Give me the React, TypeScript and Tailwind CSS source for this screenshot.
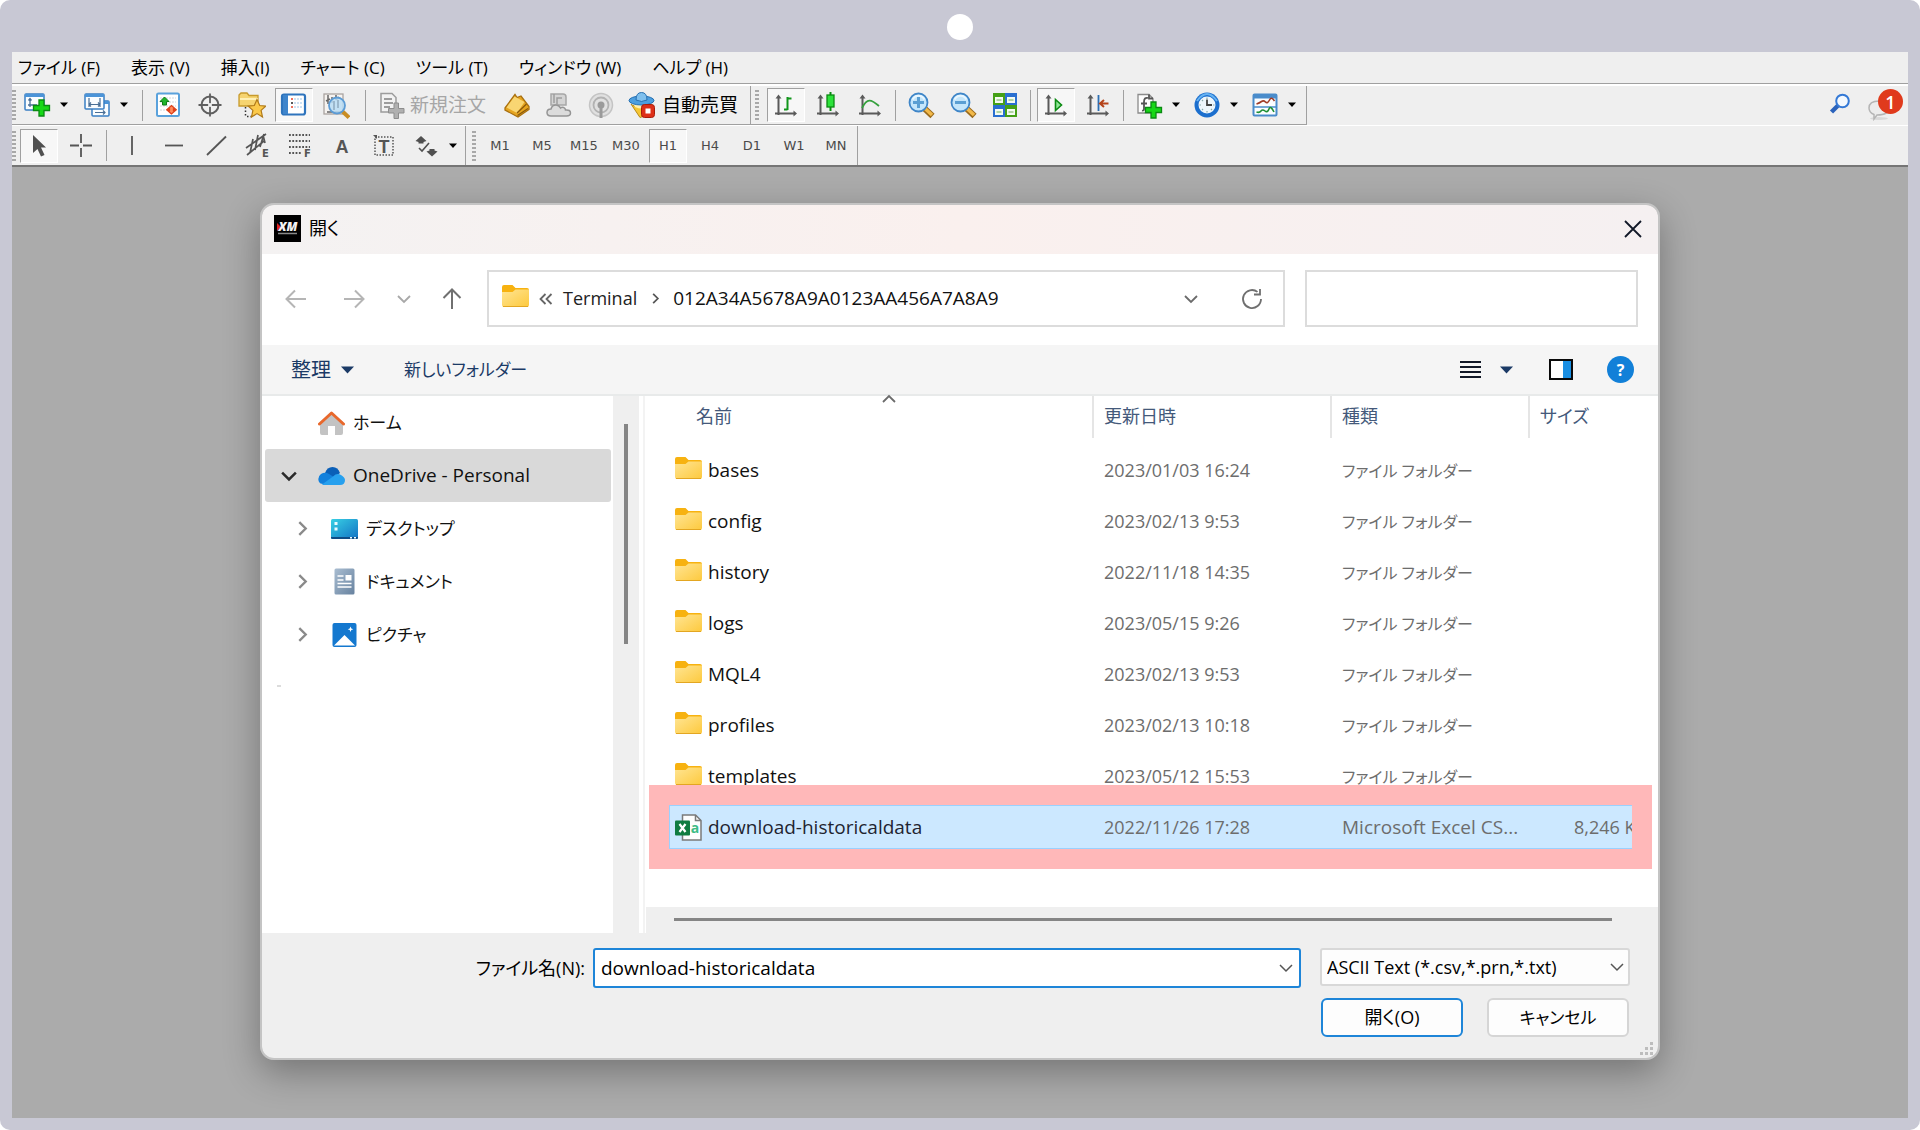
import { useState } from 'react';
import type { ReactNode } from 'react';

const FONT = "font-['Open_Sans','Noto_Sans_CJK_JP',sans-serif] [font-feature-settings:'palt']";

const MENUS = ['ファイル (F)', '表示 (V)', '挿入(I)', 'チャート (C)', 'ツール (T)', 'ウィンドウ (W)', 'ヘルプ (H)'];
const PERIODS = ['M1', 'M5', 'M15', 'M30', 'H1', 'H4', 'D1', 'W1', 'MN'];

const FILES = [
  { name: 'bases', date: '2023/01/03 16:24' },
  { name: 'config', date: '2023/02/13 9:53' },
  { name: 'history', date: '2022/11/18 14:35' },
  { name: 'logs', date: '2023/05/15 9:26' },
  { name: 'MQL4', date: '2023/02/13 9:53' },
  { name: 'profiles', date: '2023/02/13 10:18' },
  { name: 'templates', date: '2023/05/12 15:53' },
];

/* ---------- toolbar parts ---------- */

function Icon({ children }: { children: ReactNode }) {
  return (
    <svg width="28" height="28" viewBox="0 0 28 28" fill="none" className="shrink-0" aria-hidden="true">
      {children}
    </svg>
  );
}

function Tool({ label, pressed, children }: { label: string; pressed?: boolean; children: ReactNode }) {
  return (
    <button
      type="button"
      aria-label={label}
      aria-pressed={pressed}
      className={
        'mx-0.5 flex h-[34px] w-[38px] shrink-0 items-center justify-center border ' +
        (pressed ? 'border-t-[#a0a0a0] border-l-[#a0a0a0] border-r-white border-b-white bg-[#f7f7f7]' : 'border-transparent')
      }
    >
      {children}
    </button>
  );
}

function Caret({ label }: { label: string }) {
  return (
    <button type="button" aria-label={label} className="flex h-[34px] w-3 shrink-0 items-center justify-center">
      <svg width="10" height="6" viewBox="0 0 10 6" aria-hidden="true">
        <path d="M1 0.500h8L5 5z" fill="#000" />
      </svg>
    </button>
  );
}

function Sep() {
  return <div className="mx-1 h-[31px] w-px shrink-0 bg-[#a0a0a0]" />;
}

function Grip() {
  return <div className="h-[30px] w-1 shrink-0 bg-[repeating-linear-gradient(to_bottom,#a8a8a8_0_2px,#efefef_2px_4px)]" />;
}

function Plus({ y }: { y: number }) {
  return (
    <path
      transform={`translate(18.500 ${y})`}
      d="M-2.500-8h5v5.500h5.500v5h-5.500v5.500h-5v-5.500h-5.500v-5h5.500z"
      fill="#17d817"
      stroke="#0a8a12"
      strokeWidth="1.300"
    />
  );
}

function Axes() {
  return (
    <g stroke="#5a5a5a" strokeWidth="2">
      <path d="M6.500 6v18M3 22.500h20" />
      <path d="M3.500 7.500h6L6.500 3.500zM21.500 19.500v6l3.500-3z" fill="#5a5a5a" stroke="none" />
    </g>
  );
}

function Magnifier({ plus }: { plus?: boolean }) {
  return (
    <Icon>
      <path d="M17.500 17.500l8 7.500" stroke="#9a6a1c" strokeWidth="6" />
      <path d="M18 17.500l7 6.500" stroke="#f2b94a" strokeWidth="3.500" />
      <circle cx="11.500" cy="11.500" r="9" fill="#c4e6fb" stroke="#3f86c8" strokeWidth="1.800" />
      <path d="M5.500 8.500c3-5 9-5 12 0" stroke="#e9f7ff" strokeWidth="2" />
      <path d={plus ? 'M6 11.500h11M11.500 6v11' : 'M6 11.500h11'} stroke="#5a9fd3" strokeWidth="3" />
    </Icon>
  );
}

function ChartWindow({ x, y, w, h }: { x: number; y: number; w: number; h: number }) {
  return (
    <g>
      <rect x={x} y={y} width={w} height={h} rx="1" fill="#fafdff" stroke="#3a7fc4" strokeWidth="1.500" />
      <path d={`M${x} ${y + 1.5}h${w}`} stroke="#4b94d8" strokeWidth="3" />
    </g>
  );
}

/* ---------- dialog icons ---------- */

function Folder() {
  return (
    <svg width="27" height="23" viewBox="0 0 27 23" className="mb-1 shrink-0" aria-hidden="true">
      <defs>
        <linearGradient id="folder" x1="0" y1="0" x2="1" y2="1">
          <stop offset="0" stopColor="#ffe594" />
          <stop offset="1" stopColor="#fdc93d" />
        </linearGradient>
      </defs>
      <path d="M0 2q0-2 2-2h8.500l3 3H25q2 0 2 2v8H0z" fill="#f7b210" />
      <path d="M0 7h10.500l3-2.500H27V20q0 2-2 2H2q-2 0-2-2z" fill="url(#folder)" />
      <path d="M1 21.500h25" stroke="#e3a621" strokeWidth="1" />
    </svg>
  );
}

function Chevron({ dir, size = 14, color = '#6b6b6b', weight = 1.5 }: { dir: 'down' | 'right' | 'up'; size?: number; color?: string; weight?: number }) {
  const d = dir === 'down' ? 'M1 4l6 6 6-6' : dir === 'up' ? 'M1 10l6-6 6 6' : 'M4 1l6 6-6 6';
  return (
    <svg width={size} height={size} viewBox="0 0 14 14" fill="none" aria-hidden="true">
      <path d={d} stroke={color} strokeWidth={weight} />
    </svg>
  );
}

function BlueCaret() {
  return (
    <svg width="13" height="8" viewBox="0 0 13 8" aria-hidden="true">
      <path d="M0 0.500h13L6.500 7.500z" fill="#1b3a66" />
    </svg>
  );
}

/* ---------- main window ---------- */

function StandardToolbar() {
  return (
    <div className="flex h-[39px] w-max items-center border-r border-b border-[#a0a0a0]">
      <Grip />
      <Tool label="新規チャート">
        <Icon>
          <ChartWindow x={2} y={3} w={19} h={16} />
          <path d="M7 8v8M5 14h9M5.500 9.500L7 7.500l1.500 2" stroke="#4a6f96" strokeWidth="1.300" />
          <Plus y={17} />
        </Icon>
      </Tool>
      <Caret label="新規チャートのメニュー" />
      <div className="w-1.5" />
      <Tool label="プロファイル">
        <Icon>
          <ChartWindow x={9} y={10} w={17} h={15} />
          <ChartWindow x={2} y={3} w={19} h={15} />
          <path d="M6 7v9M17 7v9M6 13.500h11M8 11.500l-2 2 2 2M15 11.500l2 2-2 2" stroke="#4a6f96" strokeWidth="1.200" />
          <path d="M12 21.500h10M20 19.500l2 2-2 2" stroke="#4a6f96" strokeWidth="1.200" />
        </Icon>
      </Tool>
      <Caret label="プロファイルのメニュー" />
      <div className="w-2" />
      <Sep />
      <Tool label="気配値表示">
        <Icon>
          <rect x="3" y="2.500" width="22" height="22.500" rx="1.500" fill="#fff" stroke="#5aa2dc" strokeWidth="2" />
          <path d="M6 7h16M6 11h16M6 15h16M6 19h16" stroke="#cfd6dc" strokeDasharray="2 1" />
          <path d="M10.500 6l4.500 4.500h-2.500v3.500h-4v-3.500H6z" fill="#1fb52b" stroke="#0d7d17" />
          <path d="M17.500 23l-4-3.500h2v-1.500h-2l4-3.500 4 3.500h-2v1.500h2z" fill="#ff8a5c" stroke="#e0421a" strokeWidth="1.300" />
        </Icon>
      </Tool>
      <Tool label="データウィンドウ">
        <Icon>
          <circle cx="14" cy="14" r="8.500" stroke="#5f5f5f" strokeWidth="2" />
          <path d="M14 2.500v23M2.500 14h23" stroke="#5f5f5f" strokeWidth="1.800" />
          <circle cx="14" cy="14" r="2" fill="#efefef" />
        </Icon>
      </Tool>
      <Tool label="ナビゲーター">
        <Icon>
          <path d="M1 4l2-2h6l2 2.500h9V15H1z" fill="#f6d470" stroke="#c79a2c" strokeWidth="1.300" />
          <path d="M2 8h18" stroke="#fff0b5" strokeWidth="2" />
          <path d="M7.500 16v10M9 25.500h5" stroke="#333" strokeWidth="1.500" strokeDasharray="1.500 2" />
          <path d="M19 8.500l2.700 6 6 .6-4.600 4.300 1.400 6.600-5.500-3.400-5.500 3.400 1.400-6.600-4.600-4.300 6-.6z" fill="#fbc94a" stroke="#b07a1a" strokeWidth="1.200" />
        </Icon>
      </Tool>
      <Tool label="ターミナル" pressed>
        <Icon>
          <rect x="2" y="3.500" width="23" height="20" rx="2" fill="#fff" stroke="#2e74bd" strokeWidth="2.200" />
          <path d="M5.500 4v19" stroke="#3e85cc" strokeWidth="5" />
          <path d="M11 8h2M11 16h2" stroke="#e8442a" strokeWidth="1.600" />
          <path d="M11 12h2" stroke="#222" strokeWidth="1.600" />
          <path d="M14 8h9M14 12h9M14 16h9" stroke="#9cc6ea" strokeWidth="1.200" strokeDasharray="2 1" />
        </Icon>
      </Tool>
      <Tool label="ストラテジーテスター">
        <Icon>
          <rect x="2" y="3" width="19" height="20" fill="#f6f3f0" stroke="#aaa4a0" strokeWidth="1.300" />
          <path d="M6 4v9M4 10l4-2M10 6v6M14 4v5M17 6l-3 3M5 21h14" stroke="#666" strokeWidth="1.500" />
          <path d="M20 20l7 6.500" stroke="#c98d24" strokeWidth="4" />
          <circle cx="15" cy="14.500" r="8" fill="#b9dcf5" fillOpacity="0.850" stroke="#5b9bd5" strokeWidth="1.800" />
          <path d="M12 10v9M16 9v8" stroke="#8ea9bf" strokeWidth="1.500" />
        </Icon>
      </Tool>
      <div className="w-1" />
      <Sep />
      <button type="button" disabled className="ml-2 flex items-center gap-1 pr-2.5 text-[19px] leading-6 text-[#a6a6a6]">
        <Icon>
          <path d="M3 2.500h11l4 4V21H3z" fill="#f2f2f2" stroke="#9c9c9c" strokeWidth="1.500" />
          <path d="M6 8h8M6 12h9M6 16h6" stroke="#9c9c9c" strokeWidth="1.800" />
          <path d="M16 12h4.500v5.500H26V22h-5.500v5.500H16V22h-5.500v-4.500H16z" fill="#b0b0b0" stroke="#8d8d8d" />
        </Icon>
        新規注文
      </button>
      <Tool label="MetaEditor">
        <Icon>
          <path d="M2 17L12 3.500l2 3 4-1.500 8 10.500v3L15 26 2 19z" fill="#e6a520" stroke="#a9700f" strokeWidth="1.300" />
          <path d="M3.500 16.500l8-11 10 5.500-7.500 11z" fill="#f9d672" />
          <path d="M14.500 24.500L25 17.500M14 22l9.500-9" stroke="#8b5a0c" strokeWidth="1.300" />
        </Icon>
      </Tool>
      <Tool label="MQL5 クラウド">
        <Icon>
          <path d="M6 3h12q3 0 3 3v8H6z" fill="#d4d4d4" stroke="#a7a7a7" strokeWidth="1.500" />
          <path d="M9 3v9M17 7h-5v6" stroke="#9d9d9d" strokeWidth="1.500" />
          <path d="M6 25q-4 0-4-3.500T6 18q1-4 5-4 3 0 4.500 3 2-1.500 4 0 1 1 1 2 5-.5 5 3 0 3-4 3z" fill="#dcdcdc" stroke="#959595" strokeWidth="1.500" />
        </Icon>
      </Tool>
      <Tool label="シグナル">
        <Icon>
          <circle cx="14" cy="14" r="11.500" fill="#e0e0e0" stroke="#c4c4c4" strokeWidth="1.500" />
          <circle cx="14" cy="14" r="7.500" stroke="#b2b2b2" strokeWidth="1.800" />
          <circle cx="14" cy="14" r="3.500" fill="#9a9a9a" />
          <path d="M14 14v13" stroke="#9a9a9a" strokeWidth="3" />
        </Icon>
      </Tool>
      <button type="button" className="mr-1 ml-1.5 flex items-center gap-1.5 pr-2 text-[19px] leading-6 text-black">
        <Icon>
          <path d="M3 13c3 4 18 4 21 0l-5 11-7 2.500z" fill="#f6c733" stroke="#b98a17" />
          <path d="M5 12q9 6 17 0l-2 4q-6 3-13 0z" fill="#fff0b0" />
          <ellipse cx="13.500" cy="9.500" rx="12.500" ry="4.500" fill="#4d9fdf" stroke="#2770b1" />
          <path d="M8 9q0-7.500 5.500-7.500T19 9q-5.500 3-11 0z" fill="#7fc0ee" stroke="#2770b1" />
          <rect x="13.500" y="13.500" width="13" height="13" rx="3" fill="#de3018" stroke="#a81d0b" />
          <rect x="17.500" y="17.500" width="5" height="5" fill="#fff" />
        </Icon>
        自動売買
      </button>
      <div className="h-full w-px shrink-0 bg-[#a0a0a0]" />
      <div className="w-1" />
      <Grip />
      <div className="w-1.5" />
      <Tool label="バーチャート" pressed>
        <Icon>
          <Axes />
          <path d="M15.500 6v13M15.500 7.500h4M12 18.500h3.500" stroke="#12961c" strokeWidth="2" />
        </Icon>
      </Tool>
      <Tool label="ローソク足">
        <Icon>
          <Axes />
          <path d="M16.500 1v19" stroke="#0a8a12" strokeWidth="2" />
          <rect x="13" y="4" width="7" height="12" fill="#2ce23a" stroke="#0a8a12" strokeWidth="1.300" />
        </Icon>
      </Tool>
      <Tool label="ラインチャート">
        <Icon>
          <Axes />
          <path d="M6 17c5-10 9-9 17-2" stroke="#35a03d" strokeWidth="1.800" />
        </Icon>
      </Tool>
      <Sep />
      <Tool label="拡大"><Magnifier plus /></Tool>
      <Tool label="縮小"><Magnifier /></Tool>
      <Tool label="チャートの整列">
        <Icon>
          <rect x="2" y="2" width="12" height="12" fill="#45a016" />
          <rect x="14" y="2" width="12" height="12" fill="#2a6fd0" />
          <rect x="2" y="14" width="12" height="12" fill="#2a6fd0" />
          <rect x="14" y="14" width="12" height="12" fill="#45a016" />
          <path d="M4 6h8v6H4zM16 6h8v6h-8zM4 18h8v6H4zM16 18h8v6h-8z" fill="#f4fbf2" />
          <path d="M5.500 9h5M17.500 9h5M5.500 21h5M17.500 21h5" stroke="#9cc88a" strokeWidth="1.500" />
        </Icon>
      </Tool>
      <Sep />
      <Tool label="自動スクロール" pressed>
        <Icon>
          <Axes />
          <path d="M13.500 8.500v11l6-5.500z" fill="#8fe796" stroke="#0a8a12" strokeWidth="1.600" />
        </Icon>
      </Tool>
      <Tool label="チャートの右端移動">
        <Icon>
          <Axes />
          <path d="M14.500 4v16" stroke="#2c6fb3" strokeWidth="1.800" />
          <path d="M16.500 12.500h8M20 9l-4 3.500 4 3.500" stroke="#b5431a" strokeWidth="2" />
        </Icon>
      </Tool>
      <Sep />
      <Tool label="インディケーター">
        <Icon>
          <path d="M3 3.500h11l4 4V22H3z" fill="#fdfdfd" stroke="#8b8b8b" strokeWidth="1.300" />
          <path d="M14 3.500v4h4M13 7q-4-1-4 4v7q0 2-2 1.500M6 12.500h6" stroke="#555" strokeWidth="1.800" />
          <Plus y={19} />
        </Icon>
      </Tool>
      <Caret label="インディケーターのメニュー" />
      <div className="w-1" />
      <Tool label="時間足">
        <Icon>
          <circle cx="14" cy="14" r="12.500" fill="#1c6fce" />
          <path d="M4 10q10-14 20 0" stroke="#67b3f2" strokeWidth="2" />
          <circle cx="14" cy="14" r="8.500" fill="#eef6fc" />
          <path d="M14 8.500V14h5" stroke="#444" strokeWidth="1.800" />
          <path d="M14 6.500v1.500M14 20v1.500M6.500 14H8M20 14h1.500M9 9l1 1M19 19l-1-1M9 19l1-1" stroke="#8aa" strokeWidth="1.200" />
        </Icon>
      </Tool>
      <Caret label="時間足のメニュー" />
      <div className="w-1" />
      <Tool label="定型チャート">
        <Icon>
          <rect x="2.500" y="3.500" width="23" height="21" rx="1" fill="#fbfdff" stroke="#4a8ccb" strokeWidth="2" />
          <path d="M2 5.500h24" stroke="#4a8ccb" strokeWidth="4" />
          <path d="M3 16h22" stroke="#4a8ccb" strokeWidth="1.500" />
          <path d="M5.500 13q3-1 5-2.500t4 .5 4-2 5 1" stroke="#a03c28" strokeWidth="1.600" />
          <path d="M5.500 21q3 1 4.500-1t4 0 4-2 5 3" stroke="#1f8f35" strokeWidth="1.600" />
        </Icon>
      </Tool>
      <Caret label="定型チャートのメニュー" />
      <div className="w-2" />
    </div>
  );
}

function LineToolbar() {
  const [period, setPeriod] = useState('H1');
  return (
    <div className="flex h-[39px] items-center">
      <Grip />
      <div className="w-0.5" />
      <Tool label="カーソル" pressed>
        <Icon>
          <path d="M8 3v18l4.500-4 3.500 7.500 3.500-1.500-3.500-7.500h5z" fill="#505050" />
        </Icon>
      </Tool>
      <Tool label="クロスヘア">
        <Icon>
          <path d="M14 2v9M14 16v9M3 13.500h9M16 13.500h9" stroke="#555" strokeWidth="1.800" />
        </Icon>
      </Tool>
      <Sep />
      <Tool label="垂直線">
        <Icon><path d="M14 4v19" stroke="#555" strokeWidth="1.800" /></Icon>
      </Tool>
      <Tool label="水平線">
        <Icon><path d="M5 13.500h18" stroke="#555" strokeWidth="1.800" /></Icon>
      </Tool>
      <Tool label="トレンドライン">
        <Icon><path d="M5 23L24 4.500" stroke="#555" strokeWidth="1.800" /></Icon>
      </Tool>
      <Tool label="等距離チャネル">
        <Icon>
          <path d="M2 16L22 2M3 23L20 9M6 21l3-14M11 18l3-15M16 15l4-13M19 3l2 8" stroke="#555" strokeWidth="1.700" />
          <text x="18" y="25" fontSize="10" fontWeight="700" fill="#555" fontFamily="DejaVu Sans, sans-serif">E</text>
        </Icon>
      </Tool>
      <Tool label="フィボナッチ">
        <Icon>
          <path d="M3 3h21M3 9h21M3 15h21M3 21h13" stroke="#555" strokeWidth="1.800" strokeDasharray="1.800 1.500" />
          <text x="18" y="25" fontSize="10" fontWeight="700" fill="#555" fontFamily="DejaVu Sans, sans-serif">F</text>
        </Icon>
      </Tool>
      <Tool label="テキスト">
        <Icon>
          <text x="14" y="20.500" textAnchor="middle" fontSize="18" fontWeight="700" fill="#555" fontFamily="Liberation Sans, sans-serif">A</text>
        </Icon>
      </Tool>
      <Tool label="テキストラベル">
        <Icon>
          <rect x="5" y="5" width="18" height="18" stroke="#555" strokeWidth="1.500" strokeDasharray="1.500 1.500" />
          <path d="M3 3h4v4z" fill="#555" />
          <text x="14" y="20.500" textAnchor="middle" fontSize="18" fontWeight="700" fill="#555" fontFamily="Liberation Sans, sans-serif">T</text>
        </Icon>
      </Tool>
      <Tool label="矢印">
        <Icon>
          <path d="M9 4l5.500 5-3 1v1.500h-5V10l-3-1zM20 24.500l-5.500-5 3-1V17h5v1.500l3 1z" fill="#505050" />
          <path d="M7 16l3 3 7-8" stroke="#505050" strokeWidth="1.600" />
        </Icon>
      </Tool>
      <Caret label="矢印のメニュー" />
      <div className="w-1.5" />
      <div className="h-full w-px bg-[#a0a0a0]" />
      <div className="w-1.5" />
      <Grip />
      <div className="w-[3px]" />
      {PERIODS.map((p) => (
        <button
          key={p}
          type="button"
          aria-pressed={p === period}
          onClick={() => setPeriod(p)}
          className={
            "mx-0.5 h-[34px] w-[38px] border font-['DejaVu_Sans',sans-serif] text-[13px] text-[#4a4a4a] " +
            (p === period ? 'border-t-[#a0a0a0] border-l-[#a0a0a0] border-r-white border-b-white bg-[#f7f7f7]' : 'border-transparent')
          }
        >
          {p}
        </button>
      ))}
      <div className="h-full w-px bg-[#a0a0a0]" />
    </div>
  );
}

function AppHeader() {
  return (
    <header className="border-b-2 border-[#757575] bg-[#efefef]">
      <nav className="flex h-8 items-center gap-[31px] border-b border-[#a0a0a0] pl-1.5">
        {MENUS.map((m) => (
          <button key={m} type="button" className="text-[17px] leading-6 whitespace-nowrap text-black">
            {m}
          </button>
        ))}
      </nav>
      <div className="flex justify-between border-t-2 border-white">
        <StandardToolbar />
        <div className="flex items-start gap-4 pt-[3px] pr-[5px]">
          <button type="button" aria-label="検索" className="pt-1">
            <svg width="22" height="22" viewBox="0 0 22 22" fill="none" aria-hidden="true">
              <path d="M9 12.500L2.500 19" stroke="#2a62bb" strokeWidth="4.500" />
              <circle cx="13.500" cy="8" r="6.300" fill="#f4f9fe" stroke="#3479d6" strokeWidth="2" />
            </svg>
          </button>
          <button type="button" aria-label="通知" className="relative h-8 w-9">
            <svg width="36" height="32" viewBox="0 0 36 32" aria-hidden="true">
              <ellipse cx="12" cy="29.500" rx="9" ry="1.500" fill="#d9d9d9" />
              <path d="M2 19q0-7 10-7t10 7q0 7-12 7l-3 4v-4.500q-5-2-5-6.500z" fill="#ececec" stroke="#b5b5b5" strokeWidth="1.500" />
            </svg>
            <span className="absolute top-0 right-0 flex size-[25px] items-center justify-center rounded-full bg-[#e03a1c] text-[18px] leading-none font-semibold text-white">
              1
            </span>
          </button>
        </div>
      </div>
      <div className="border-t border-white">
        <LineToolbar />
      </div>
    </header>
  );
}

/* ---------- file dialog ---------- */

function TitleBar() {
  return (
    <div className="flex h-[49px] items-center justify-between bg-linear-to-r from-[#f4f2f2] via-[#faf0ee] to-[#f5f0f1] pr-4 pb-0.5 pl-3">
      <h1 className="flex items-center gap-2 text-[18px] text-black">
        <svg width="27" height="27" viewBox="0 0 27 27" aria-hidden="true">
          <rect width="27" height="27" fill="#000" />
          <path d="M3 8l4 4-4 4z" fill="#e02020" />
          <text x="14" y="16" textAnchor="middle" fontSize="12" fontWeight="800" fontStyle="italic" fill="#f2f2f2" fontFamily="Open Sans, sans-serif">XM</text>
          <path d="M4 18.500h19" stroke="#8a8a8a" strokeWidth="1.500" />
        </svg>
        開く
      </h1>
      <button type="button" aria-label="閉じる">
        <svg width="18" height="18" viewBox="0 0 18 18" fill="none" aria-hidden="true">
          <path d="M1 1l16 16M17 1L1 17" stroke="#111827" strokeWidth="1.800" />
        </svg>
      </button>
    </div>
  );
}

function AddressRow() {
  return (
    <div className="flex h-[91px] items-center gap-5 bg-white pr-5 pb-0.5 pl-[23px]">
      <div className="flex shrink-0 items-center">
        <button type="button" aria-label="戻る" className="w-[58px]">
          <svg width="22" height="20" viewBox="0 0 22 20" fill="none" aria-hidden="true">
            <path d="M21 10H2M10 1.500L1.500 10l8.500 8.500" stroke="#b5b5b5" strokeWidth="2" />
          </svg>
        </button>
        <button type="button" aria-label="進む" className="w-[54px]">
          <svg width="22" height="20" viewBox="0 0 22 20" fill="none" aria-hidden="true">
            <path d="M1 10h19M12 1.500l8.500 8.500-8.500 8.500" stroke="#b5b5b5" strokeWidth="2" />
          </svg>
        </button>
        <button type="button" aria-label="最近表示した場所" className="w-[45px]">
          <Chevron dir="down" color="#a8a8a8" weight={1.8} />
        </button>
        <button type="button" aria-label="上へ" className="w-[25px]">
          <svg width="20" height="22" viewBox="0 0 20 22" fill="none" aria-hidden="true">
            <path d="M10 21V2M1.500 10L10 1.500l8.500 8.500" stroke="#707070" strokeWidth="2" />
          </svg>
        </button>
      </div>
      <div className="flex h-[57px] min-w-0 flex-1 items-center border-2 border-[#dcdcdc] bg-white pr-5 pl-[13px]">
        <Folder />
        <span className="flex w-[34px] justify-center">
          <svg width="14" height="12" viewBox="0 0 14 12" fill="none" aria-hidden="true">
            <path d="M6.500 1L1.500 6l5 5M12.500 1l-5 5 5 5" stroke="#666" strokeWidth="1.800" />
          </svg>
        </span>
        <span className="text-[18px] text-[#222]">Terminal</span>
        <span className="flex w-9 justify-center"><Chevron dir="right" size={11} color="#555" weight={2.2} /></span>
        <span className="flex-1 truncate text-[19px] text-[#111]">012A34A5678A9A0123AA456A7A8A9</span>
        <button type="button" aria-label="履歴" className="mr-[43px]"><Chevron dir="down" weight={1.8} /></button>
        <button type="button" aria-label="最新の情報に更新">
          <svg width="22" height="22" viewBox="0 0 22 22" fill="none" aria-hidden="true">
            <path d="M20 11a9 9 0 1 1-3.500-7.100" stroke="#6f6f6f" strokeWidth="1.800" />
            <path d="M19 1v5.500h-6" stroke="#6f6f6f" strokeWidth="1.800" />
          </svg>
        </button>
      </div>
      <input type="search" aria-label="検索" className="h-[57px] w-[333px] border-2 border-[#dcdcdc] bg-white px-3 text-[18px] outline-none" />
    </div>
  );
}

function CommandBar() {
  return (
    <div className="flex h-[51px] items-center justify-between border-b-2 border-[#e8eaea] bg-[#f5f5f5] pr-6 pl-[29px] text-[#1b3a66]">
      <div className="flex items-center gap-[50px]">
        <button type="button" className="flex items-center gap-2.5 text-[20px] leading-6">
          整理
          <BlueCaret />
        </button>
        <button type="button" className="text-[17px] leading-6">新しいフォルダー</button>
      </div>
      <div className="flex items-center">
        <button type="button" aria-label="表示方法の変更" className="flex items-center gap-[18px]">
          <svg width="22" height="18" viewBox="0 0 22 18" aria-hidden="true">
            <path d="M0 1h21M0 6h21M0 11h21M0 16h21" stroke="#111827" strokeWidth="2" />
          </svg>
          <BlueCaret />
        </button>
        <button type="button" aria-label="プレビュー ウィンドウ" className="ml-9">
          <svg width="24" height="21" viewBox="0 0 24 21" aria-hidden="true">
            <rect x="1" y="1" width="22" height="19" fill="#fff" />
            <rect x="14" y="1" width="9" height="19" fill="#1a8fe3" />
            <rect x="1" y="1" width="22" height="19" fill="none" stroke="#0a0a0a" strokeWidth="2" />
          </svg>
        </button>
        <button
          type="button"
          aria-label="ヘルプ"
          className="ml-[34px] flex size-[27px] items-center justify-center rounded-full bg-[#1280d8] text-[16px] leading-none font-bold text-white"
        >
          ?
        </button>
      </div>
    </div>
  );
}

function Sidebar() {
  return (
    <div className="flex w-[377px] shrink-0 bg-white">
      <nav className="flex-1 pr-0.5 pl-[3px] text-[17px] text-[#111]">
        <a href="#home" className="flex h-[53px] items-center gap-2 pl-[53px]">
          <svg width="27" height="26" viewBox="0 0 27 26" fill="none" aria-hidden="true">
            <path d="M2 12L13.500 3 25 12v11q0 2-2 2h-6v-9h-7v9H4q-2 0-2-2z" fill="#c3c3c3" />
            <path d="M1.500 14L13.500 3l12 11" stroke="#e8682c" strokeWidth="3" strokeLinecap="round" strokeLinejoin="round" />
          </svg>
          ホーム
        </a>
        <a href="#onedrive" className="flex h-[53px] items-center rounded-[3px] bg-[#d9d9d9] pl-4 text-[19px]">
          <span className="w-[37px]"><Chevron dir="down" size={16} color="#2a2a2a" weight={2.2} /></span>
          <svg width="27" height="18" viewBox="0 0 27 18" className="mr-2" aria-hidden="true">
            <path d="M7 6Q9 0 14.500 0 20 0 22 6l-8 6z" fill="#0a5fb8" />
            <path d="M1 15q-2-5 2-8 4-2.500 8 0l8 5-6 5H5q-3 0-4-2z" fill="#1280dc" />
            <path d="M4 17.500l11-8q4-4 8-1.500 4 2.500 4 5 0 5-5 5H7q-2 0-3-.5z" fill="#27a0ee" />
          </svg>
          OneDrive - Personal
        </a>
        <a href="#desktop" className="flex h-[53px] items-center pl-[30px]">
          <span className="w-9"><Chevron dir="right" size={15} color="#8a8a8a" weight={2.2} /></span>
          <svg width="27" height="20" viewBox="0 0 27 20" className="mr-2" aria-hidden="true">
            <defs>
              <linearGradient id="desk" x1="0" y1="0" x2="1" y2="1">
                <stop offset="0" stopColor="#38d0e4" />
                <stop offset="1" stopColor="#1272c4" />
              </linearGradient>
            </defs>
            <rect width="27" height="20" rx="1.500" fill="url(#desk)" />
            <path d="M0 18h27v.5q0 1.500-1.500 1.500h-24Q0 20 0 18.500z" fill="#0f4c85" />
            <path d="M3.500 3h3v3h-3zM3.500 8.500h3v3h-3zM19 18h2v1.500h-2zM23 18h2v1.500h-2z" fill="#e9fbff" />
          </svg>
          デスクトップ
        </a>
        <a href="#documents" className="flex h-[53px] items-center pl-[30px]">
          <span className="w-9"><Chevron dir="right" size={15} color="#8a8a8a" weight={2.2} /></span>
          <svg width="27" height="27" viewBox="0 0 27 27" className="mr-2" aria-hidden="true">
            <defs>
              <linearGradient id="doc" x1="0" y1="0" x2="1" y2="1">
                <stop offset="0" stopColor="#a9bdd1" />
                <stop offset="1" stopColor="#67829f" />
              </linearGradient>
            </defs>
            <rect x="3.500" y="0.500" width="20" height="26" rx="1.500" fill="url(#doc)" />
            <path d="M6.500 8h6M6.500 12h6M6.500 15.500h14M6.500 19h14" stroke="#fff" strokeWidth="1.600" />
            <rect x="14.500" y="7" width="6" height="5.500" fill="#fff" />
          </svg>
          ドキュメント
        </a>
        <a href="#pictures" className="flex h-[53px] items-center pl-[30px]">
          <span className="w-9"><Chevron dir="right" size={15} color="#8a8a8a" weight={2.2} /></span>
          <svg width="27" height="24" viewBox="0 0 27 24" className="mr-2" aria-hidden="true">
            <rect x="1.500" width="24" height="24" rx="2" fill="#1478cf" />
            <path d="M3 22.500L13.500 12 24 22.500z" fill="#fff" />
            <path d="M19.500 3.500l.8 2 2 .8-2 .8-.8 2-.8-2-2-.8 2-.8z" fill="#fff" />
          </svg>
          ピクチャ
        </a>
        <div className="mt-6 ml-3 h-0.5 w-1 bg-[#dcdcdc]" />
      </nav>
      <div className="w-[26px] bg-[#efefef] pt-7">
        <div className="mx-auto h-[220px] w-1 bg-[#858585]" />
      </div>
    </div>
  );
}

const COLS = 'grid grid-cols-[minmax(0,1fr)_238px_198px_104px]';

function FileList() {
  return (
    <div className="ml-1 flex min-w-0 flex-1 flex-col border-l-2 border-[#f3f3f3] bg-white">
      <div className="relative pr-[26px] pb-[58px] pl-6">
        <table className="block overflow-hidden text-left text-[18px] text-[#6d6d6d]">
          <thead className="block">
            <tr className={COLS + ' mb-[7px] h-[42px] text-[18px] text-[#44597a]'}>
              <th scope="col" className="flex items-center pb-0.5 pl-[27px] font-normal">名前</th>
              <th scope="col" className="flex items-center border-l-2 border-[#e5e5e5] pb-0.5 pl-2.5 font-normal">更新日時</th>
              <th scope="col" className="flex items-center border-l-2 border-[#e5e5e5] pb-0.5 pl-2.5 font-normal">種類</th>
              <th scope="col" className="flex items-center border-l-2 border-[#e5e5e5] pb-0.5 pl-2.5 font-normal">サイズ</th>
            </tr>
          </thead>
          <tbody className="block">
            {FILES.map((f) => (
              <tr key={f.name} className={COLS + ' h-[51px] items-center'}>
                <td className="flex items-center gap-1.5 pl-1.5 text-[19px] text-[#111]">
                  <Folder />
                  {f.name}
                </td>
                <td className="pl-3">{f.date}</td>
                <td className="pl-3 text-[16px]">ファイル フォルダー</td>
                <td />
              </tr>
            ))}
            <tr className={COLS + ' relative z-10 mt-[3px] h-11 items-center border border-r-0 border-[#99d1ff] bg-[#cce8ff]'}>
              <td className="flex items-center gap-1.5 pl-[5px] text-[19px] text-[#1f2430]">
                <svg width="27" height="27" viewBox="0 0 27 27" className="shrink-0" aria-hidden="true">
                  <path d="M7.500 1h13l5.500 5.500V26H7.500z" fill="#fdfdfd" stroke="#7a7a7a" strokeWidth="1.500" />
                  <path d="M20.500 1v5.500H26" fill="none" stroke="#7a7a7a" strokeWidth="1.500" />
                  <rect y="6.500" width="15" height="15" rx="1" fill="#107c41" />
                  <path d="M4.500 10l6 8M10.500 10l-6 8" stroke="#fff" strokeWidth="2.200" />
                  <text x="20" y="18.500" textAnchor="middle" fontSize="14" fontWeight="700" fill="#3dbb85" fontFamily="Open Sans, sans-serif">a</text>
                </svg>
                download-historicaldata
              </td>
              <td className="pl-3">2022/11/26 17:28</td>
              <td className="pl-3 text-[19px] whitespace-nowrap">Microsoft Excel CS...</td>
              <td className="overflow-hidden pl-[46px] whitespace-nowrap">8,246 KB</td>
            </tr>
          </tbody>
        </table>
        {/* highlight frame behind the selected file */}
        <div className="absolute right-1.5 bottom-[38px] left-1 h-[84px] bg-[#ffb8b9]" />
        <span className="absolute -top-1 left-[237px]"><Chevron dir="up" weight={1.8} /></span>
      </div>
      <div className="ml-px h-[26px] bg-[#efefef] pt-[11px] pr-[46px] pl-7">
        <div className="h-[3px] bg-[#858585]" />
      </div>
    </div>
  );
}

function DialogFooter() {
  const [name, setName] = useState('download-historicaldata');
  return (
    <div className="bg-[#efefef] pt-[15px] pr-7 pb-[21px]">
      <div className="flex items-start gap-[19px] text-[18px] text-black">
        <div className="flex min-w-0 flex-1 items-center gap-2">
          <label htmlFor="filename" className="w-[323px] shrink-0 text-right">ファイル名(N):</label>
          <div className="flex h-10 min-w-0 flex-1 items-center rounded-[3px] border-2 border-[#1e85d8] bg-white pr-1.5 pl-1.5">
            <input
              id="filename"
              type="text"
              value={name}
              onChange={(e) => setName(e.target.value)}
              className="min-w-0 flex-1 bg-transparent text-[19px] outline-none"
            />
            <button type="button" aria-label="ファイル名の候補"><Chevron dir="down" color="#555" /></button>
          </div>
        </div>
        <div className="relative w-[310px]">
          <select
            aria-label="ファイルの種類"
            className="h-[38px] w-full appearance-none rounded-[3px] border-2 border-[#d8d8d8] bg-[#fdfdfd] pl-[5px] text-[18px] outline-none"
          >
            <option>ASCII Text (*.csv,*.prn,*.txt)</option>
          </select>
          <span className="pointer-events-none absolute top-3 right-1.5"><Chevron dir="down" color="#555" /></span>
        </div>
      </div>
      <div className="mt-2.5 flex justify-end gap-6 pr-px text-[18px] text-black">
        <button type="button" className="h-[39px] w-[142px] rounded-md border-2 border-[#1e85d8] bg-[#fdfdfd]">開く(O)</button>
        <button type="button" className="h-[39px] w-[142px] rounded-md border-2 border-[#d5d5d5] bg-[#fdfdfd] text-[17px]">キャンセル</button>
      </div>
    </div>
  );
}

export default function App() {
  return (
    <div className={'min-h-screen bg-white ' + FONT}>
      <div className="flex min-h-screen flex-col rounded-[10px] bg-[#c8c8d4] px-3 pb-3">
        <div className="flex h-[52px] shrink-0 items-center justify-center pt-0.5">
          <div className="size-[26px] rounded-full bg-white" />
        </div>
        <AppHeader />
        <main className="flex-1 bg-[#ababab] px-6 pt-9 pb-14">
          <div
            role="dialog"
            aria-label="開く"
            className="relative mx-auto max-w-[1400px] overflow-hidden rounded-[14px] border-2 border-[#c4c4c4] shadow-[0_12px_36px_rgba(0,0,0,0.32)]"
          >
            <TitleBar />
            <AddressRow />
            <CommandBar />
            <div className="flex bg-white">
              <Sidebar />
              <FileList />
            </div>
            <DialogFooter />
            <svg width="14" height="14" viewBox="0 0 14 14" className="absolute right-1 bottom-0.5" aria-hidden="true">
              <path d="M10 0h3v3h-3zM5 5h3v3H5zM10 5h3v3h-3zM0 10h3v3H0zM5 10h3v3H5zM10 10h3v3h-3z" fill="#bdbdbd" />
            </svg>
          </div>
        </main>
      </div>
    </div>
  );
}
